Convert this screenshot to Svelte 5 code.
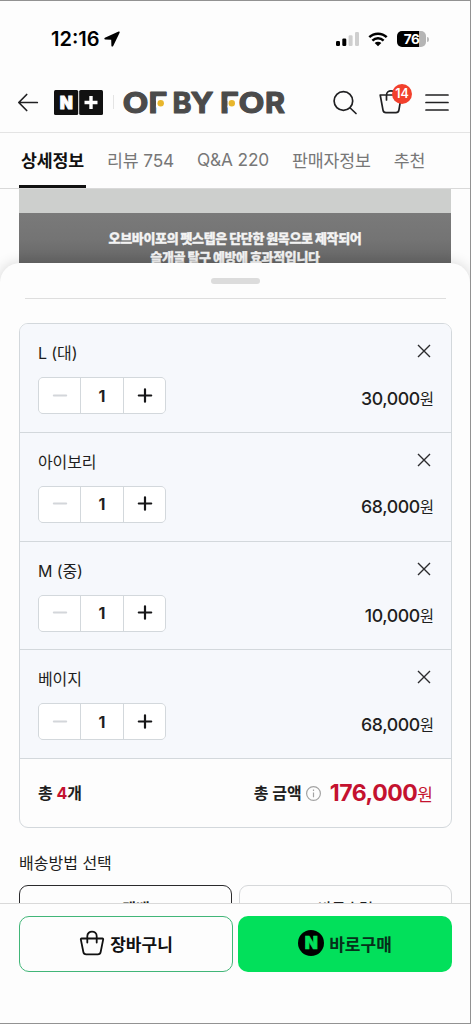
<script lang="ts">
  type Option = {
    id: number;
    name: string;
    price: number;
    quantity: number;
  };

  const tabs = ['상세정보', '리뷰 754', 'Q&A 220', '판매자정보', '추천'];

  let activeTab = $state('상세정보');
  let options = $state<Option[]>([
    { id: 1, name: 'L (대)', price: 30000, quantity: 1 },
    { id: 2, name: '아이보리', price: 68000, quantity: 1 },
    { id: 3, name: 'M (중)', price: 10000, quantity: 1 },
    { id: 4, name: '베이지', price: 68000, quantity: 1 }
  ]);

  const totalCount = $derived(options.reduce((sum, option) => sum + option.quantity, 0));
  const totalPrice = $derived(
    options.reduce((sum, option) => sum + option.price * option.quantity, 0)
  );

  function formatPrice(value: number) {
    return value.toLocaleString('en-US');
  }

  function changeQuantity(option: Option, step: number) {
    option.quantity = Math.max(1, option.quantity + step);
  }

  function removeOption(id: number) {
    options = options.filter((option) => option.id !== id);
  }
</script>

<div class="screen">
  <div class="status-bar">
    <span class="time">12:16</span>
    <svg class="location" width="16" height="16" viewBox="0 0 16 16">
      <path d="M14.6.6.9 6.7c-.9.5-.7 1.8.3 1.8l6 .2.2 6c.1 1.1 1.4 1.2 1.8.2L15.600 1.700c.3-.8-.3-1.400-1-1.100Z" />
    </svg>
    <svg class="signal" width="24" height="16" viewBox="0 0 24 16">
      <rect x="0" y="10" width="4" height="5" rx="1.2" />
      <rect x="6.3" y="7.5" width="4" height="7.5" rx="1.2" />
      <rect class="off" x="12.6" y="4.2" width="4" height="10.8" rx="1.2" />
      <rect class="off" x="19" y="1" width="4" height="14" rx="1.2" />
    </svg>
    <svg class="wifi" width="20" height="15" viewBox="0 0 20 15">
      <path class="arc" d="M1.3 5.2a12.6 12.6 0 0 1 17.4 0M4.4 8.6a8.1 8.1 0 0 1 11.2 0" />
      <path d="M10 14.3 6.7 11a4.7 4.7 0 0 1 6.6 0Z" />
    </svg>
    <div class="battery"><span>76</span></div>
    <i class="battery-tip"></i>
  </div>

  <header>
    <svg class="back" width="20" height="20" viewBox="0 0 20 20">
      <path d="M19.3 10.5H1M8.7 2.5.8 10.5l7.9 8" />
    </svg>
    <svg class="nplus" width="49" height="25" viewBox="0 0 49 25">
      <rect width="24.2" height="25" rx="1.5" />
      <rect x="25.2" width="23.8" height="25" rx="1.5" />
      <text x="12.3" y="18.6" text-anchor="middle">N</text>
      <path d="M37 6v13M30.5 12.5h13" />
    </svg>
    <i class="bar"></i>
    <svg class="brand" width="164" height="26" viewBox="0 0 164 26">
      <text x="25.500" y="23.800" textLength="19" lengthAdjust="spacingAndGlyphs">F</text>
      <text x="97" y="23.800" textLength="19" lengthAdjust="spacingAndGlyphs">F</text>
      <rect x="33" y="8.5" width="12" height="10" />
      <rect x="104.500" y="8.5" width="12" height="10" />
      <circle cx="37.7" cy="14.2" r="3.2" />
      <circle cx="108.8" cy="14.2" r="3.2" />
      <text x="-.5" y="23.800" textLength="26" lengthAdjust="spacingAndGlyphs">O</text>
      <text x="49.500" y="23.800" textLength="19" lengthAdjust="spacingAndGlyphs">B</text>
      <text x="67.5" y="23.800" textLength="23" lengthAdjust="spacingAndGlyphs">Y</text>
      <text x="115.5" y="23.800" textLength="26" lengthAdjust="spacingAndGlyphs">O</text>
      <text x="142" y="23.800" textLength="20" lengthAdjust="spacingAndGlyphs">R</text>
    </svg>
    <svg class="search" width="24" height="24" viewBox="0 0 24 24">
      <circle cx="10.4" cy="11" r="9.3" />
      <path d="m17.2 18 5.8 5.5" />
    </svg>
    <div class="cart">
      <svg width="24" height="26" viewBox="0 0 24 26">
        <path d="M1.2 6h21.3l-2.6 15.2a3 3 0 0 1-3 2.5H7a3 3 0 0 1-3-2.5ZM7.5 11V6c0-5.5 9-5.5 9 0v5" />
      </svg>
      <span class="badge">14</span>
    </div>
    <svg class="menu" width="23" height="18" viewBox="0 0 23 18">
      <path d="M0 2h22M0 9.5h22M0 17h22" />
    </svg>
  </header>

  <nav>
    {#each tabs as tab}
      <button class="tab" class:active={tab === activeTab} onclick={() => (activeTab = tab)}>
        {tab}
      </button>
    {/each}
  </nav>

  <div class="detail">
    <div class="detail-image">
      <p>오브바이포의 펫스텝은 단단한 원목으로 제작되어</p>
      <p>슬개골 탈구 예방에 효과적입니다</p>
    </div>
  </div>

  <section class="sheet">
    <div class="handle"></div>
    <div class="divider"></div>

    <div class="card">
      {#each options as option (option.id)}
        <div class="option">
          <div class="row">
            <span class="name">{option.name}</span>
            <button class="remove" aria-label="삭제" onclick={() => removeOption(option.id)}>
              <svg width="14" height="14" viewBox="0 0 14 14">
                <path d="m1 1 12 12M13 1 1 13" />
              </svg>
            </button>
          </div>
          <div class="row">
            <div class="stepper">
              <button
                class="minus"
                aria-label="수량 빼기"
                disabled={option.quantity === 1}
                onclick={() => changeQuantity(option, -1)}
              >
                <svg width="14" height="14" viewBox="0 0 14 14"><path d="M.8 6.5h12.4" /></svg>
              </button>
              <span>{option.quantity}</span>
              <button
                class="plus"
                aria-label="수량 더하기"
                onclick={() => changeQuantity(option, 1)}
              >
                <svg width="14" height="14" viewBox="0 0 14 14">
                  <path d="M.8 6.5h12.4M7 .3v12.4" />
                </svg>
              </button>
            </div>
            <span class="price">{formatPrice(option.price)}<small>원</small></span>
          </div>
        </div>
      {/each}
      <div class="total">
        <span class="count">총 <em>{totalCount}</em>개</span>
        <span class="label">총 금액</span>
        <svg class="info" width="15" height="15" viewBox="0 0 15 15">
          <circle cx="7.5" cy="7.5" r="6.9" />
          <path d="M7.5 6.5v4.800M7.5 3.5v1.400" />
        </svg>
        <span class="sum">{formatPrice(totalPrice)}<small>원</small></span>
      </div>
    </div>

    <h2>배송방법 선택</h2>
    <div class="delivery">
      <div class="method selected">택배</div>
      <div class="method">바로수령</div>
    </div>
  </section>

  <footer>
    <button class="basket">
      <svg width="26" height="26" viewBox="0 0 26 26">
        <path d="M2.5 8.5h21c.5 0 .8.4.7.9l-2.5 12.4a3 3 0 0 1-3 2.5H7.3a3 3 0 0 1-3-2.5L1.8 9.4c-.1-.5.2-.9.7-.9ZM8.3 12.5V6.2c0-6.2 9.4-6.2 9.4 0v6.3" />
      </svg>
      장바구니
    </button>
    <button class="buy">
      <span class="n">N</span>
      바로구매
    </button>
  </footer>
</div>

<style>
  :global(body) {
    margin: 0;
  }

  .screen {
    box-sizing: border-box;
    display: flex;
    flex-direction: column;
    width: 471px;
    height: 1024px;
    overflow: hidden;
    border: 1px solid #929292;
    border-left: 0;
    background: #fdfdfd;
    color: #1e1e20;
    font-family: Inter, 'Noto Sans CJK KR', sans-serif;
  }

  svg {
    flex: none;
    display: block;
    overflow: visible;
  }

  button {
    padding: 0;
    border: 0;
    background: none;
    color: inherit;
    font: inherit;
  }

  .status-bar {
    flex: none;
    display: flex;
    align-items: center;
    height: 76px;
    padding: 0 41px 0 51px;
  }

  .time {
    width: 49px;
    font-size: 20px;
    font-weight: 600;
    color: #000;
  }

  .location {
    margin-left: 4px;
  }

  .signal {
    margin-left: auto;
  }

  .signal .off {
    fill: #cfcfcf;
  }

  .wifi {
    margin-left: 8px;
  }

  .wifi .arc {
    fill: none;
    stroke: #000;
    stroke-width: 2.5;
  }

  .battery {
    width: 29px;
    height: 16px;
    margin-left: 9px;
    border-radius: 5px;
    background: linear-gradient(90deg, #000 76%, #b5b5b5 76%);
    color: #fff;
    font-size: 13.5px;
    font-weight: 700;
    line-height: 16px;
    letter-spacing: -0.5px;
    text-align: center;
  }

  .battery-tip {
    width: 2px;
    height: 5px;
    margin-left: 1px;
    border-radius: 0 2px 2px 0;
    background: #bbb;
  }

  header {
    flex: none;
    box-sizing: border-box;
    display: flex;
    align-items: center;
    height: 56px;
    padding: 0 21px 5px 18px;
    border-bottom: 1px solid #e4e4e4;
  }

  .back path,
  .search,
  .cart path,
  .menu path {
    fill: none;
    stroke: #202022;
    stroke-width: 1.7;
    stroke-linecap: round;
    stroke-linejoin: round;
  }

  .nplus {
    margin-left: 16px;
    fill: #111;
  }

  .nplus text {
    fill: #fff;
    stroke: #fff;
    stroke-width: 0.8;
    font-size: 17px;
    font-weight: 900;
  }

  .nplus path {
    stroke: #fff;
    stroke-width: 3.4;
  }

  .bar {
    width: 1px;
    height: 14px;
    margin-left: 10px;
    background: #e4e4e4;
  }

  .brand {
    margin-left: 9px;
  }

  .brand text {
    fill: #4b4b4b;
    stroke: #4b4b4b;
    stroke-width: 1.1;
    stroke-linejoin: round;
    font-size: 29px;
    font-weight: 700;
  }

  .brand rect {
    fill: #fdfdfd;
  }

  .brand circle {
    fill: #e8b62c;
  }

  .search {
    margin-left: auto;
  }

  .cart {
    position: relative;
    margin-left: 22px;
  }

  .badge {
    position: absolute;
    top: -5px;
    left: 13px;
    width: 20px;
    height: 20px;
    border-radius: 50%;
    background: #f2402c;
    color: #fff;
    font-size: 12.5px;
    font-weight: 600;
    line-height: 20px;
    text-align: center;
  }

  .menu {
    margin-left: 23px;
  }

  nav {
    flex: none;
    box-sizing: border-box;
    display: flex;
    gap: 19px;
    height: 56px;
    padding-left: 19px;
    border-bottom: 1px solid #d9d9d9;
  }

  .tab {
    box-sizing: border-box;
    height: 55px;
    padding: 0 2px;
    border-bottom: 3px solid transparent;
    color: #777;
    font-size: 17.3px;
    letter-spacing: -0.15px;
    white-space: nowrap;
  }

  .tab.active {
    border-color: #111;
    color: #111;
    font-weight: 700;
  }

  .detail {
    flex: none;
    height: 74px;
    padding: 0 19px;
  }

  .detail-image {
    box-sizing: border-box;
    height: 74px;
    padding-top: 40px;
    overflow: hidden;
    background: linear-gradient(#cdcfcd 24px, #7a7a7a 24px, #747474 50px, #666 74px);
    color: #f3f3f3;
    font-size: 13px;
    font-weight: 900;
    line-height: 19px;
    letter-spacing: -0.35px;
    text-align: center;
    -webkit-text-stroke: 0.3px #f3f3f3;
  }

  .detail-image p {
    margin: 0;
  }

  .sheet {
    flex: 1;
    min-height: 0;
    overflow: hidden;
    position: relative;
    padding: 0 18px 0 19px;
    border-radius: 20px 20px 0 0;
    background: #fdfdfd;
    box-shadow: 0 0 14px rgb(0 0 0 / 0.16);
  }

  .handle {
    width: 49px;
    height: 6px;
    margin: 15px auto 14px;
    border-radius: 3px;
    background: #dcdcdc;
  }

  .divider {
    height: 1px;
    margin: 0 6px 24px;
    background: #dedede;
  }

  .card {
    border: 1px solid #d3d8dc;
    border-radius: 9px;
    overflow: hidden;
  }

  .option {
    box-sizing: border-box;
    height: 108.8px;
    padding: 17px 17px 0 18px;
    border-bottom: 1px solid #d3d8dc;
    background: #f6f8fc;
  }

  .row {
    display: flex;
    align-items: center;
    justify-content: space-between;
  }

  .name {
    height: 24px;
    font-size: 16px;
    line-height: 24px;
    letter-spacing: -0.1px;
  }

  .remove {
    margin: -4px 3px 0 0;
  }

  .remove path {
    stroke: #2b2b2d;
    stroke-width: 1.4;
  }

  .stepper {
    box-sizing: border-box;
    display: grid;
    grid-template-columns: 41px 42px 41px;
    gap: 1px;
    width: 128px;
    height: 37px;
    margin-top: 12px;
    border: 1px solid #d3d8dc;
    border-radius: 5px;
    background: #d3d8dc;
    overflow: hidden;
  }

  .stepper > * {
    display: flex;
    align-items: center;
    justify-content: center;
    background: #fff;
    font-size: 16px;
    font-weight: 700;
  }

  .stepper path {
    stroke: #161618;
    stroke-width: 2.2;
    stroke-linecap: round;
  }

  .stepper .minus path {
    stroke: #d3d6da;
    stroke-width: 2;
  }

  .price {
    margin-top: 16px;
    font-size: 17.7px;
    font-weight: 500;
    letter-spacing: -0.4px;
  }

  .price small {
    font-size: 15.5px;
    font-weight: 400;
    letter-spacing: 0;
  }

  .total {
    display: flex;
    align-items: center;
    height: 68px;
    padding: 0 18px;
    font-size: 16px;
    font-weight: 700;
  }

  .count {
    margin: -2px auto 0 0;
  }

  .count em {
    color: #c4122f;
    font-style: normal;
  }

  .label {
    margin-top: -2px;
  }

  .info {
    margin: 0 9px 0 4px;
    fill: none;
    stroke: #a3a3a3;
    stroke-width: 1.2;
  }

  .sum {
    color: #c4122f;
    font-size: 23px;
    letter-spacing: -0.45px;
    white-space: nowrap;
  }

  .sum small {
    font-size: 17px;
    font-weight: 400;
    letter-spacing: 0;
  }

  h2 {
    margin: 23px 0 10px;
    font-size: 16px;
    font-weight: 400;
    line-height: 24px;
  }

  .delivery {
    display: grid;
    grid-template-columns: 1fr 1fr;
    gap: 7px;
  }

  .method {
    box-sizing: border-box;
    height: 56px;
    padding-top: 12px;
    border: 1px solid #d6d8da;
    border-radius: 9px;
    font-size: 15px;
    font-weight: 500;
    line-height: 22px;
    text-align: center;
  }

  .method.selected {
    padding-left: 21px;
    border-color: #2a2a2c;
    font-weight: 700;
  }

  footer {
    flex: none;
    position: relative;
    box-sizing: border-box;
    display: grid;
    grid-template-columns: 214px 214px;
    gap: 5px;
    height: 120px;
    padding: 12px 18px 51px 19px;
    border-top: 1px solid #d9d9d9;
    background: #fdfdfd;
  }

  footer button {
    display: flex;
    align-items: center;
    justify-content: center;
    padding-bottom: 2px;
    border-radius: 10px;
    font-size: 17px;
    font-weight: 700;
  }

  .basket {
    gap: 5px;
    border: 1px solid #41b678;
    color: #111;
  }

  .basket path {
    fill: none;
    stroke: #111;
    stroke-width: 1.8;
    stroke-linejoin: round;
    stroke-linecap: round;
  }

  footer .buy {
    gap: 5px;
    background: #02e05b;
    color: #06301a;
  }

  .n {
    width: 26px;
    height: 26px;
    border-radius: 50%;
    background: #000;
    color: #02e05b;
    font-size: 17px;
    font-weight: 900;
    line-height: 26px;
    text-align: center;
    -webkit-text-stroke: 0.6px #02e05b;
  }
</style>
